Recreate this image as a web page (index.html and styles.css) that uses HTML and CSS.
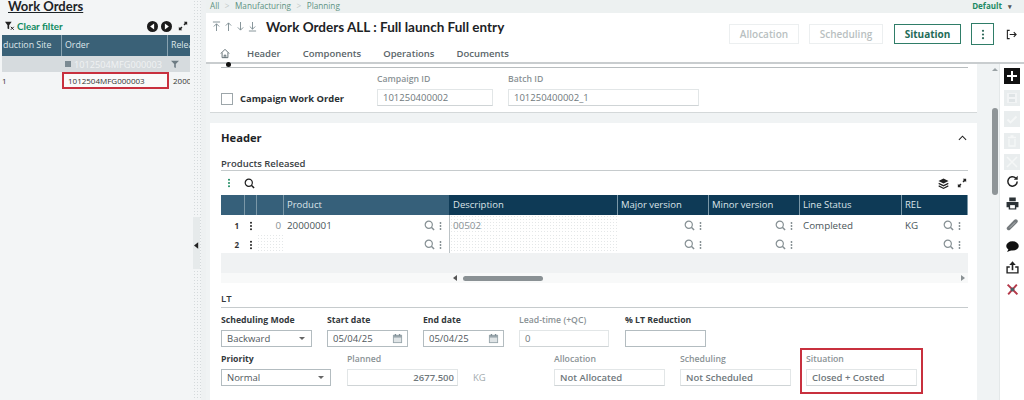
FILE: index.html
```html
<!DOCTYPE html>
<html lang="en">
<head>
<meta charset="utf-8">
<title>Work Orders</title>
<link rel="stylesheet" href="styles.css">
</head>
<body>
<svg class="defs" width="0" height="0">
  <symbol id="mag" viewBox="0 0 12 12"><circle cx="5.2" cy="5.2" r="3.9" fill="none" stroke="currentColor" stroke-width="1.3"/><path d="M8 8l3 3" stroke="currentColor" stroke-width="1.6"/></symbol>
  <symbol id="dots" viewBox="0 0 4 12"><circle cx="2" cy="2" r="1.2" fill="currentColor"/><circle cx="2" cy="6" r="1.2" fill="currentColor"/><circle cx="2" cy="10" r="1.2" fill="currentColor"/></symbol>
  <symbol id="expand" viewBox="0 0 12 12"><path d="M7 1h4v4L9.700 3.700 8 5.400 6.600 4 8.300 2.300zM5 11H1V7l1.300 1.300L4 6.600 5.400 8 3.700 9.700z" fill="currentColor"/></symbol>
  <symbol id="cal" viewBox="0 0 12 12"><path d="M1 2h10v9H1z" fill="#9aa7ad"/><path d="M2 5h8v5H2z" fill="#dfe4e6"/><path d="M3 1h1.500v2H3zM7.500 1H9v2H7.500z" fill="#7f8d94"/></symbol>
</svg>
<div class="app">
  <aside class="left">
    <h2 class="left-title">Work Orders</h2>
    <div class="left-tools">
      <span class="clear">
        <svg class="clear-icon" viewBox="0 0 12 12"><path d="M0 1h8L5 5v5L3 9V5z" fill="#222"/><path d="M7 7l3.500 3.500M10.500 7L7 10.500" stroke="#222" stroke-width="1.200"/></svg>
        Clear filter
      </span>
      <span class="pager">
        <svg class="round" viewBox="0 0 12 12"><circle cx="6" cy="6" r="6" fill="#1b1b1b"/><path d="M7.800 2.800v6.400L3.400 6z" fill="#fff"/></svg>
        <svg class="round" viewBox="0 0 12 12"><circle cx="6" cy="6" r="6" fill="#1b1b1b"/><path d="M4.200 2.800v6.400L8.600 6z" fill="#fff"/></svg>
        <svg class="exp"><use href="#expand"/></svg>
      </span>
    </div>
    <div class="left-grid">
      <div class="lh lh-site">duction Site</div>
      <div class="lh">Order</div>
      <div class="lh lh-rel">Relea</div>
      <div class="lf"></div>
      <div class="lf lf-order"><i class="sq"></i>1012504MFG000003</div>
      <div class="lf"><svg class="funnel" viewBox="0 0 10 10"><path d="M0 1h10L6 5v5L4 9V5z" fill="#6d7b83"/></svg></div>
      <div class="lc">1</div>
      <div class="lc lc-order">1012504MFG000003</div>
      <div class="lc lc-rel">2000</div>
    </div>
  </aside>

  <div class="splitter">
    <div class="split-grab"><svg class="split-arrow" viewBox="0 0 6 8"><path d="M5 0v8L0 4z" fill="#222"/></svg></div>
  </div>

  <div class="page">
    <div class="crumbs">
      <span class="crumb-links">All<b>&gt;</b>Manufacturing<b>&gt;</b>Planning</span>
      <span class="crumb-default">Default <em>▾</em></span>
    </div>
    <header class="head">
      <div class="head-top">
        <div class="arrows">
          <svg viewBox="0 0 10 12"><path d="M1 1h8M5 11V3M2 6l3-3 3 3" fill="none" stroke="#7b8a90"/></svg>
          <svg viewBox="0 0 10 12"><path d="M5 11V2M2 5l3-3 3 3" fill="none" stroke="#7b8a90"/></svg>
          <svg viewBox="0 0 10 12"><path d="M5 1v9M2 7l3 3 3-3" fill="none" stroke="#7b8a90"/></svg>
          <svg viewBox="0 0 10 12"><path d="M1 11h8M5 1v8M2 6l3 3 3-3" fill="none" stroke="#7b8a90"/></svg>
        </div>
        <h1 class="title">Work Orders ALL : Full launch Full entry</h1>
        <div class="actions">
          <span class="btn btn-off">Allocation</span>
          <span class="btn btn-off">Scheduling</span>
          <span class="btn btn-on">Situation</span>
          <span class="btn-more"><svg class="dots-s"><use href="#dots"/></svg></span>
          <svg class="logout" viewBox="0 0 12 12"><path d="M4 1.500H1.500v9H4" fill="none" stroke="#222" stroke-width="1.200"/><path d="M4 6h7M8.500 3.500L11 6 8.500 8.500" fill="none" stroke="#222" stroke-width="1.200"/></svg>
        </div>
      </div>
      <nav class="tabs">
        <svg class="home" viewBox="0 0 12 12"><path d="M1 6l5-5 5 5M2.500 5v6h7V5M5 11V8h2v3" fill="none" stroke="#4b5a60"/></svg>
        <span>Header</span><span>Components</span><span>Operations</span><span>Documents</span>
        <i class="tab-dot"></i>
      </nav>
    </header>

    <div class="body">
      <main class="scroll">
        <section class="card card-top">
          <div class="cw">
            <i class="check"></i>
            <span class="cw-label">Campaign Work Order</span>
            <div class="field f-cid"><label>Campaign ID</label><div class="inp">101250400002</div></div>
            <div class="field f-bid"><label>Batch ID</label><div class="inp">101250400002_1</div></div>
          </div>
        </section>

        <section class="card card-main">
          <div class="card-head">
            <h3>Header</h3>
            <svg class="chev" viewBox="0 0 10 6"><path d="M1 5l4-4 4 4" fill="none" stroke="#222" stroke-width="1.200"/></svg>
          </div>
          <h4 class="sub">Products Released</h4>
          <div class="tbar">
            <span class="tbar-l"><svg class="dots-g"><use href="#dots"/></svg><svg class="mag-b"><use href="#mag"/></svg></span>
            <span class="tbar-r">
              <svg class="layers" viewBox="0 0 12 12"><path d="M6 .5l5.500 2.700L6 6 .5 3.200z" fill="#222"/><path d="M1 5.200L6 7.700l5-2.500.5 1.300L6 9.200.5 6.500z" fill="#222"/><path d="M1 8L6 10.500 11 8l.5 1.300L6 12 .5 9.300z" fill="#222"/></svg>
              <svg class="exp"><use href="#expand"/></svg>
            </span>
          </div>

          <div class="tbl">
            <div class="th"></div><div class="th"></div><div class="th"></div>
            <div class="th th-sep">Product</div>
            <div class="th dk">Description</div>
            <div class="th dk">Major version</div>
            <div class="th dk">Minor version</div>
            <div class="th dk">Line Status</div>
            <div class="th dk">REL</div>

            <div class="td num">1</div>
            <div class="td mid"><svg class="dots-k"><use href="#dots"/></svg></div>
            <div class="td zero">0</div>
            <div class="td sep">20000001<span class="tools"><svg class="mag"><use href="#mag"/></svg><svg class="dots-t"><use href="#dots"/></svg></span></div>
            <div class="td dim hatch">00502</div>
            <div class="td"><span class="tools"><svg class="mag"><use href="#mag"/></svg><svg class="dots-t"><use href="#dots"/></svg></span></div>
            <div class="td"><span class="tools"><svg class="mag"><use href="#mag"/></svg><svg class="dots-t"><use href="#dots"/></svg></span></div>
            <div class="td">Completed</div>
            <div class="td">KG<span class="tools"><svg class="mag"><use href="#mag"/></svg><svg class="dots-t"><use href="#dots"/></svg></span></div>

            <div class="td num">2</div>
            <div class="td mid"><svg class="dots-k"><use href="#dots"/></svg></div>
            <div class="td hatch"></div>
            <div class="td sep"><span class="tools"><svg class="mag"><use href="#mag"/></svg><svg class="dots-t"><use href="#dots"/></svg></span></div>
            <div class="td hatch"></div>
            <div class="td"><span class="tools"><svg class="mag"><use href="#mag"/></svg><svg class="dots-t"><use href="#dots"/></svg></span></div>
            <div class="td"><span class="tools"><svg class="mag"><use href="#mag"/></svg><svg class="dots-t"><use href="#dots"/></svg></span></div>
            <div class="td"></div>
            <div class="td"><span class="tools"><svg class="mag"><use href="#mag"/></svg><svg class="dots-t"><use href="#dots"/></svg></span></div>
          </div>
          <div class="tbl-empty"></div>
          <div class="hscroll">
            <i class="ar-l"></i><i class="thumb"></i><i class="ar-r"></i>
          </div>

          <h4 class="sub lt">LT</h4>
          <div class="row r1">
            <div class="field w91"><label class="strong">Scheduling Mode</label><div class="inp live sel">Backward<i class="caret"></i></div></div>
            <div class="field w81"><label class="strong">Start date</label><div class="inp live sel">05/04/25<svg class="cal"><use href="#cal"/></svg></div></div>
            <div class="field w81"><label class="strong">End date</label><div class="inp live sel">05/04/25<svg class="cal"><use href="#cal"/></svg></div></div>
            <div class="field w90"><label>Lead-time (+QC)</label><div class="inp">0</div></div>
            <div class="field w81 shift"><label class="strong">% LT Reduction</label><div class="inp live"></div></div>
          </div>
          <div class="row r2">
            <div class="field w110"><label class="strong">Priority</label><div class="inp live sel">Normal<i class="caret"></i></div></div>
            <div class="field w111 shift"><label>Planned</label><div class="inp right bold">2677.500</div></div>
            <span class="unit">KG</span>
            <div class="field w111"><label>Allocation</label><div class="inp bold">Not Allocated</div></div>
            <div class="field w111"><label>Scheduling</label><div class="inp bold">Not Scheduled</div></div>
            <div class="field w111 flagged"><label>Situation</label><div class="inp bold">Closed + Costed</div></div>
          </div>
        </section>
      </main>

      <div class="vscroll"><i class="v-up"></i><i class="v-thumb"></i></div>

      <aside class="rail">
        <span class="rb rb-on"><svg viewBox="0 0 12 12"><path d="M6 1v10M1 6h10" stroke="#fff" stroke-width="2"/></svg></span>
        <span class="rb"><svg viewBox="0 0 12 12"><path d="M1 1h10v10H1z" fill="#f2f4f5"/><path d="M3 2h6v3H3zM3 7h6v3H3z" fill="#dfe4e6"/></svg></span>
        <span class="rb"><svg viewBox="0 0 12 12"><path d="M1.500 6.500l3 3 6-6" fill="none" stroke="#f5f7f7" stroke-width="1.800"/></svg></span>
        <span class="rb"><svg viewBox="0 0 12 12"><path d="M2 2.500h8M3 4v7h6V4M4.500 1h3" fill="none" stroke="#f5f7f7" stroke-width="1.300"/></svg></span>
        <span class="rb"><svg viewBox="0 0 12 12"><path d="M1 1l10 10M11 1L1 11" stroke="#f5f7f7" stroke-width="1.500"/></svg></span>
        <svg class="ri ri-first" viewBox="0 0 12 12"><path d="M10.300 6a4.300 4.300 0 1 1-1.300-3.100" fill="none" stroke="#222" stroke-width="1.400"/><path d="M10.800.8v3.600H7.200z" fill="#222"/></svg>
        <svg class="ri" viewBox="0 0 12 12"><path d="M3 .5h6v3.500H3zM.5 4.500h11V9.500H9.500V11.500h-7V9.500H.5z" fill="#2b3236"/><path d="M3.800 7.500h4.400v3H3.800z" fill="#fff"/></svg>
        <svg class="ri" viewBox="0 0 12 12"><path d="M2.500 9.500l6.500-6.500" fill="none" stroke="#74797c" stroke-width="3.600" stroke-linecap="round"/><path d="M3.500 9l5-5" stroke="#c4c8ca" stroke-width=".7"/></svg>
        <svg class="ri" viewBox="0 0 12 12"><ellipse cx="6" cy="5.500" rx="5.800" ry="4.300" fill="#111"/><path d="M2.500 8l-1.500 3 4.500-1.700z" fill="#111"/></svg>
        <svg class="ri" viewBox="0 0 12 12"><path d="M3.500 5.500H1V11h10V5.500H8.500" fill="none" stroke="#222" stroke-width="1.300"/><path d="M6 8.500V2" stroke="#222" stroke-width="1.500"/><path d="M3 3.800L6 .3l3 3.500z" fill="#222"/></svg>
        <svg class="ri" viewBox="0 0 12 12"><path d="M1.500 1.500l9 9M10 1.500l-8 9" stroke="#b5394a" stroke-width="1.800"/><circle cx="6" cy="6" r="1.800" fill="#4f5c62"/></svg>
      </aside>
    </div>
  </div>
</div>
</body>
</html>
```

FILE: styles.css
```css
* { box-sizing: border-box; }
html, body { margin: 0; height: 400px; overflow: hidden; }
body { font-family: "Open Sans", "Liberation Sans", sans-serif; font-size: 10px; color: #4a5559; background: #fff; }
.defs { position: absolute; }
.app { display: flex; width: 1024px; height: 400px; }

/* left panel */
.left { width: 193px; flex: none; background: #f3f5f6; overflow: hidden; }
.left-title { margin: 0 0 0 8px; font: 700 13px/13px "Lato", sans-serif; color: #1d2326; text-decoration: underline; }
.left-tools { display: flex; justify-content: space-between; align-items: center; height: 20px; margin-top: 3px; padding: 0 5px; }
.clear { display: flex; align-items: center; gap: 2px; font: 700 9.800px "Lato", sans-serif; color: #0f8a5f; }
.clear-icon { width: 10px; height: 10px; }
.pager { display: flex; align-items: center; gap: 3px; }
.round { width: 11px; height: 11px; }
.exp { width: 10px; height: 10px; color: #222; margin-left: 3px; }
.left-grid { display: grid; grid-template-columns: 60px 106px 22px; grid-template-rows: 21px 16px 17px; margin: -1px 3px 0 2px; }
.lh { background: #3a6177; color: #dde6ea; border-right: 1px solid #88a2b0; padding: 4px 3px 0; font-size: 8.800px; line-height: 13px; white-space: nowrap; overflow: hidden; }
.lh-site { padding-left: 1px; }
.lh-rel { border-right: 0; padding-right: 0; }
.lf { background: #d6dbde; display: flex; align-items: center; color: #f0f2f3; padding-left: 3px; overflow: hidden; }
.lf-order { font-size: 9.200px; white-space: nowrap; }
.sq { width: 6px; height: 6px; flex: none; background: #7b8a92; margin-right: 3px; }
.funnel { width: 8px; height: 8px; }
.lc { font-size: 8px; color: #333; padding-top: 3px; white-space: nowrap; overflow: hidden; }
.lc-order { border: 2px solid #c8303e; background: #fafafa; padding-left: 4px; padding-top: 0; line-height: 13px; margin-right: -1px; }
.lc-rel { padding-left: 5px; }

/* splitter */
.splitter { width: 13px; flex: none; background: radial-gradient(#d5dadc 1px, transparent 1px) 0 0 / 3px 3px, #f3f5f6; padding-top: 217px; border-right: 5px solid #eef1f2; }
.split-grab { width: 7px; height: 52px; background: #e6eaeb; display: flex; align-items: center; padding: 4px 0 0 1px; }
.split-arrow { width: 5px; height: 7px; }

/* page */
.page { flex: 1; display: flex; flex-direction: column; min-width: 0; }
.crumbs { height: 13px; background: #edf1f1; display: flex; justify-content: space-between; padding: 0 12px 0 4px; font-size: 8.200px; line-height: 11px; color: #5d9382; }
.crumb-links b { font-weight: 400; color: #c0c8c8; margin: 0 5.500px; }
.crumb-default { font-weight: 700; color: #1d8a63; font-size: 8px; }
.crumb-default em { font-style: normal; color: #555; font-size: 7px; margin-left: 4px; }
.head { height: 51px; background: #fff; border-bottom: 2px solid #c9cdcf; padding-left: 6px; }
.head-top { display: flex; align-items: flex-start; height: 32px; }
.arrows { display: flex; gap: 3px; width: 54px; margin-top: 8px; }
.arrows svg { width: 9px; height: 11px; }
.title { margin: 5px 0 0; font: 700 13.500px/18px "Lato", sans-serif; color: #1d2326; white-space: nowrap; }
.actions { margin-left: auto; margin-top: 10px; display: flex; align-items: center; padding-right: 7px; }
.btn { height: 20px; display: flex; align-items: center; justify-content: center; font-weight: 600; font-size: 10px; }
.btn-off { border: 1px solid #eceff0; color: #b9bfc1; width: 70px; margin-right: 10px; }
.btn-off + .btn-off { width: 74px; margin-right: 11px; }
.btn-on { border: 1px solid #2f7d68; color: #1f6c58; width: 67px; margin-right: 10px; font-weight: 700; }
.btn-more { width: 23px; height: 22px; border: 1px solid #2f7d68; display: flex; align-items: center; justify-content: center; color: #2f6a5a; margin-right: 12px; }
.dots-s { width: 4px; height: 11px; }
.logout { width: 11px; height: 11px; }
.tabs { display: flex; align-items: center; position: relative; height: 17px; font-size: 9.500px; font-weight: 600; color: #5a6569; }
.tabs span { margin-right: 22px; }
.tabs .home { width: 10px; height: 11px; margin: 0 17px 0 8px; }
.tab-dot { position: absolute; left: 14px; bottom: -5px; width: 5px; height: 5px; border-radius: 50%; background: #111; }

.body { flex: 1; display: flex; min-height: 0; }
.scroll { width: 771px; flex: none; background: #f0f3f4; padding: 0 0 0 4px; overflow: hidden; }
.card { background: #fff; width: 769px; }
.card-top { height: 49px; border-bottom: 1px solid #d4d8d9; margin-bottom: 10px; padding: 3px 11px 0; }
.cw { display: flex; align-items: flex-end; border-top: 1px solid #b8bdbf; padding-top: 7px; height: 39px; }
.check { width: 12px; height: 12px; border: 1px solid #9da6aa; background: #fff; margin: 0 7px 1px 0; }
.cw-label { font-weight: 700; font-size: 9.400px; color: #2a3033; width: 137px; line-height: 14px; }
.field label { display: block; font-size: 8.700px; line-height: 11px; font-weight: 600; color: #8a9295; margin-bottom: 4px; white-space: nowrap; }
.field label.strong { color: #33393c; font-weight: 700; }
.inp { height: 17px; border: 1px solid #e2e6e7; border-bottom-color: #cfd4d6; padding: 0 5px; font-size: 9.500px; line-height: 15px; color: #6f787c; position: relative; white-space: nowrap; }
.f-cid { width: 116px; margin-right: 15px; }
.f-bid { width: 191px; }

.card-main { height: 277px; padding: 7px 11px 0; }
.card-head { display: flex; justify-content: space-between; align-items: center; height: 15px; }
.card-head h3 { margin: 0; font-size: 11.200px; font-weight: 700; color: #1d2326; }
.chev { width: 9px; height: 6px; margin-right: 1px; }
.sub { margin: 12px 0 0; font-size: 9.500px; font-weight: 600; color: #3a4144; border-bottom: 1px solid #c6cbcd; line-height: 13px; padding-bottom: 0; }
.tbar { display: flex; justify-content: space-between; align-items: center; height: 24px; }
.tbar-l, .tbar-r { display: flex; align-items: center; }
.dots-g { width: 4px; height: 10px; color: #1a8a60; margin: 0 13px 0 6px; }
.mag-b { width: 11px; height: 11px; color: #1b1b1b; }
.layers { width: 11px; height: 11px; }
.tbar-r .exp { margin: 0 1px 0 8px; }

.tbl { display: grid; grid-template-columns: 24px 12px 27px 166px 168px 91px 91px 102px 66px; grid-template-rows: 20px 19px 19px; width: 747px; }
.th { background: #36607a; color: #dbe4e9; font-size: 9.500px; line-height: 19px; padding-left: 3px; border-right: 1px solid #7b98a8; white-space: nowrap; }
.th.dk { background: #0e3a56; }
.th-sep { border-right-color: #0e3a56; }
.td { font-size: 9.800px; line-height: 20px; padding-top: 1px; color: #4a5559; padding-left: 3px; position: relative; white-space: nowrap; overflow: visible; }
.sep { border-right: 1px solid #bcc3c6; }
.num { font-weight: 700; font-size: 8px; text-align: right; padding-right: 6px; color: #333; }
.mid { padding: 2px 0 0 4px; display: flex; align-items: center; }
.zero { text-align: right; padding-right: 3px; color: #8a9295; }
.dim { color: #8a9295; }
.hatch { background: radial-gradient(#e4e7e8 .6px, transparent .8px) 0 0 / 3px 3px; margin-bottom: 1px; }
.tools { position: absolute; right: 7px; top: 5px; display: flex; align-items: center; gap: 4px; }
.mag { width: 11px; height: 11px; color: #858f93; }
.dots-t { width: 3px; height: 10px; color: #7d878b; }
.dots-k { width: 4px; height: 10px; color: #222; }
.tbl-empty { height: 20px; width: 747px; background: #f0f2f3; }
.hscroll { height: 10px; width: 747px; display: flex; align-items: center; padding: 0 3px 0 232px; background: #f8f9f9; }
.ar-l { border: 3px solid transparent; border-right: 4px solid #555; border-left: 0; margin-right: 6px; }
.thumb { width: 80px; height: 5px; border-radius: 3px; background: #8a9194; }
.ar-r { border: 3px solid transparent; border-left: 4px solid #8a9194; border-right: 0; margin-left: auto; }

.sub.lt { margin-top: 9px; padding-bottom: 2px; color: #33393c; }
.row { display: flex; gap: 15px; }
.r1 { margin-top: 7px; }
.r2 { margin-top: 7px; }
.w91 { width: 91px; }
.w81 { width: 81px; }
.w90 { width: 90px; }
.w110 { width: 110px; }
.w111 { width: 111px; }
.shift { margin-left: 1px; }
.inp.live { border-color: #b3bcc0; color: #4f585c; }
.sel { padding-right: 16px; }
.caret { position: absolute; right: 6px; top: 6px; border: 3px solid transparent; border-top: 3px solid #666; border-bottom: 0; }
.cal { position: absolute; right: 4px; top: 2px; width: 11px; height: 11px; }
.right { text-align: right; padding-right: 3px; }
.bold { font-weight: 600; }
.unit { padding-top: 17px; font-size: 9.500px; color: #a3abae; width: 81px; margin-right: -15px; }
.flagged { position: relative; }
.flagged::after { content: ""; position: absolute; left: -6px; right: -6px; top: -6px; bottom: -8px; border: 2px solid #c8303e; }

/* scrollbar + rail */
.vscroll { width: 23px; flex: none; background: #f0f3f4; position: relative; border-right: 1px solid #e4e8e9; }
.v-up { position: absolute; left: 15px; top: 4px; border: 3px solid transparent; border-bottom: 3px solid #9aa2a5; border-top: 0; }
.v-thumb { position: absolute; left: 15px; top: 44px; width: 6px; height: 87px; border-radius: 3px; background: #8f9598; }
.rail { flex: 1; background: #fff; display: flex; flex-direction: column; align-items: center; padding-top: 4px; gap: 5.500px; }
.rb { width: 16px; height: 16px; background: #e9edee; display: flex; align-items: center; justify-content: center; }
.rb svg { width: 12px; height: 12px; }
.rb-on { background: #111; }
.ri { width: 13px; height: 13px; margin: 1.500px 0; flex: none; }
.ri-first { margin-top: -.500px; }
```
